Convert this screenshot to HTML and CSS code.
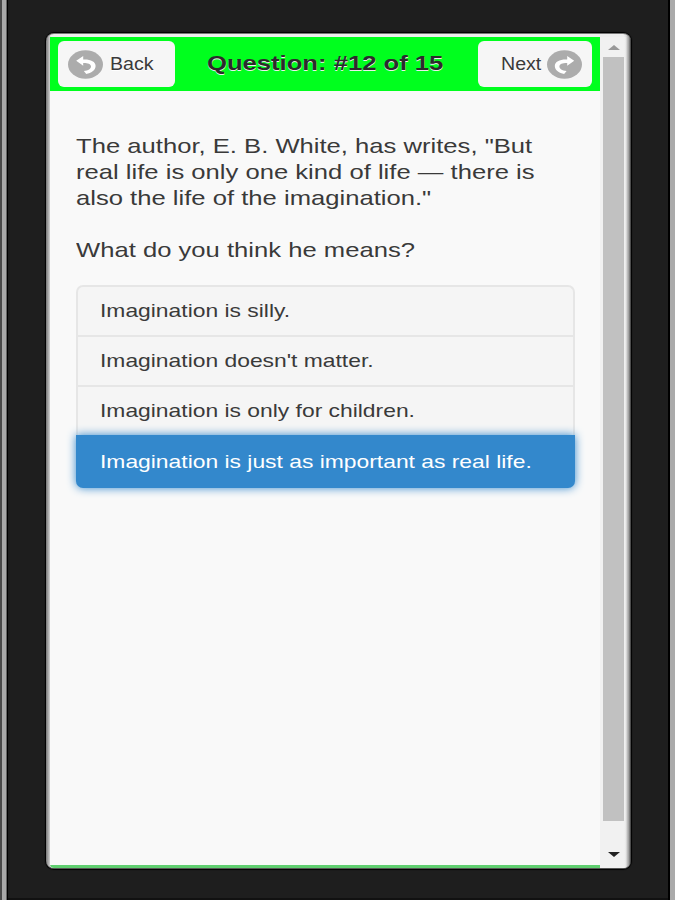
FILE: index.html
```
<!DOCTYPE html>
<html lang="en">
<head>
    <meta charset="UTF-8">
    <meta name="viewport" content="width=device-width, initial-scale=1.0">
    <title>Question</title>
    <link rel="stylesheet" href="styles.css">
</head>
<body>
    <div class="device">
        <div class="screen">
            <div class="page">
                <div class="header">
                    <a class="btn back">
                        <svg class="icon" viewBox="0 0 35 29">
                            <ellipse cx="17.5" cy="14.5" rx="17.5" ry="14.3" fill="#acacac"/>
                            <path d="M8.2 10.8 L15.2 6 L15.2 9.6 C22 9.2 27.6 11.4 27.6 16 C27.6 20.4 23 23 18.3 24 L15.8 21 C20.5 20.4 23 18.6 23 16.4 C23 13.8 19.5 12.8 15.2 12.9 L15.2 15.8 Z" fill="#fff"/>
                        </svg>
                        <span class="wide">Back</span>
                    </a>
                    <h1><span class="wide">Question: #12 of 15</span></h1>
                    <a class="btn next">
                        <span class="wide">Next</span>
                        <svg class="icon" viewBox="0 0 35 29">
                            <ellipse cx="17.5" cy="14.5" rx="17.5" ry="14.3" fill="#acacac"/>
                            <path d="M27.2 10.8 L20.2 6 L20.2 9.6 C13.4 9.2 7.8 11.4 7.8 16 C7.8 20.4 12.4 23 17.1 24 L19.6 21 C14.9 20.4 12.4 18.6 12.4 16.4 C12.4 13.8 15.9 12.8 20.2 12.9 L20.2 15.8 Z" fill="#fff"/>
                        </svg>
                    </a>
                </div>
                <div class="content">
                    <p>
                        <span class="wide">The author, E. B. White, has writes, "But</span>
                        <span class="wide">real life is only one kind of life — there is</span>
                        <span class="wide">also the life of the imagination."</span>
                    </p>
                    <p><span class="wide">What do you think he means?</span></p>
                    <ul class="answers">
                        <li><span class="wide">Imagination is silly.</span></li>
                        <li><span class="wide">Imagination doesn't matter.</span></li>
                        <li><span class="wide">Imagination is only for children.</span></li>
                        <li class="active"><span class="wide">Imagination is just as important as real life.</span></li>
                    </ul>
                </div>
                <div class="footer"></div>
            </div>
            <div class="scrollbar">
                <div class="arrow up"></div>
                <div class="thumb"></div>
                <div class="arrow down"></div>
            </div>
        </div>
    </div>
</body>
</html>
```
FILE: styles.css
```
* { box-sizing: border-box; }
body {
    margin: 0;
    height: 900px;
    overflow: hidden;
    font-family: "Liberation Sans", Arial, sans-serif;
    color: #3a3a3a;
    background: linear-gradient(90deg, #4a4a4a 0 2px, #aaa 2px 6px, #666 6px 7px, #000 7px 8px, #1e1e1e 8px 668px, #000 668px 670px, #aaa 670px);
}
.device {
    height: 900px;
    margin: 0 7px 0 8px;
    padding: 33px 38px 0;
    border-bottom: 2px solid #111;
}
.screen {
    display: flex;
    width: 585px;
    height: 836px;
    padding: 3px 3px 0 4px;
    border-radius: 8px;
    background: linear-gradient(90deg, #777 0, #bbb 3px, #eee 5px, #eee 578px, #ddd 580px, #999 583px, #333 585px);
    box-shadow: 0 0 1px 1px #000;
    border-top: 1px solid #777;
    border-bottom: 1px solid #555;
}
.page {
    display: flex;
    flex-direction: column;
    width: 550px;
    background: #f9f9f9;
    border-bottom-left-radius: 4px;
    overflow: hidden;
}

/* letters are drawn wider than they are high */
.wide {
    display: block;
    width: max-content;
    white-space: nowrap;
    transform: scaleX(1.22);
    transform-origin: left;
}

.header {
    display: flex;
    align-items: center;
    height: 54px;
    padding: 0 8px;
    background: #00ff1e;
}
.btn {
    display: flex;
    align-items: center;
    height: 46px;
    border-radius: 6px;
    background: #f6f6f6;
    font-size: 17.5px;
}
.btn .wide { transform: scaleX(1.12); text-shadow: 0 1px 0 #fff; }
.back { width: 117px; padding-left: 10px; gap: 7px; }
.next { width: 114px; padding-left: 23px; gap: 10px; }
.icon { width: 35px; height: 29px; flex: none; }
h1 {
    flex: 1;
    margin: 0;
    padding-left: 32px;
    font-size: 21px;
    line-height: 24px;
    padding-bottom: 2px;
    color: #2b2b2b;
    text-shadow: 0 1px 0 #eee;
}
h1 .wide { transform: scaleX(1.22); }

.content { flex: 1; padding: 42px 26px 0; }
p {
    margin: 0 0 26px;
    font-size: 21px;
    line-height: 26px;
}
.answers {
    margin: -4px 0 0;
    padding: 0;
    list-style: none;
    width: 499px;
    border-radius: 7px;
    font-size: 18.5px;
}
.answers li {
    display: flex;
    align-items: center;
    height: 50px;
    padding-left: 22px;
    background: #f5f5f5;
    border: 2px solid #e6e6e6;
    border-bottom: 0;
}
.answers li:first-child { border-radius: 7px 7px 0 0; }
.answers .wide { transform: scaleX(1.235); }
.answers .active {
    height: 53px;
    border: 0;
    padding-left: 24px;
    border-radius: 0 0 7px 7px;
    background: #3388cc;
    color: #fff;
    box-shadow: 0 0 10px #3388cc;
}
.footer { height: 3px; background: #60cf70; }

.scrollbar {
    display: flex;
    flex-direction: column;
    align-items: center;
    width: 27px;
    background: linear-gradient(90deg, #f1f1f1 24px, transparent);
}
.thumb { width: 21px; height: 764px; background: #c1c1c1; }
.arrow { border: 6px solid transparent; }
.up { margin: 8px 0 7px; border-top-width: 0; border-bottom: 5px solid #999; }
.down { margin-top: 31px; border-bottom: 0; border-top: 5px solid #222; }
```
